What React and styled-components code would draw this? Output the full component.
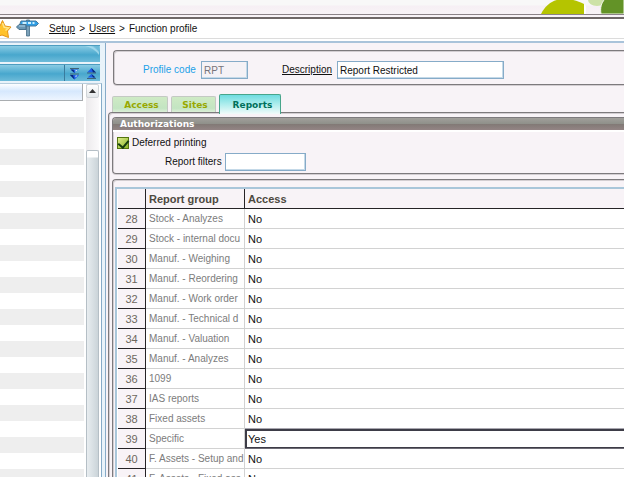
import React from "react";
import styled, { createGlobalStyle, css } from "styled-components";

const GlobalStyle = createGlobalStyle`
  * { box-sizing: border-box; }
  html, body { margin: 0; height: 100%; overflow: hidden; }
  body { font: 10px/14px "Liberation Sans", Arial, sans-serif; color: #111; background: #f8f3f7; }
  #root { height: 100%; }
  button, input { font: inherit; color: inherit; }
`;

const Page = styled.div`
  height: 100vh;
  display: flex;
  flex-direction: column;
`;

const Banner = styled.header`
  height: 19px;
  flex: none;
  display: flex;
  justify-content: flex-end;
  background: linear-gradient(#f8f8f8 5px, #f6eff4 6px, #f8f3f7 14px);
  border-bottom: 2px solid #6f6868;
  svg { display: block; height: 14px; }
`;

const BannerArt = styled.div`
  flex: 1;
  height: 15px;
  display: flex;
  justify-content: flex-end;
  border-bottom: 1px solid #8b8388;
`;

const Crumbs = styled.nav`
  height: 24px;
  flex: none;
  display: flex;
  align-items: center;
  padding-bottom: 3px;
  background: linear-gradient(#fff 19px, #dcdcdc 19px, #dcdcdc 20px, #fff 20px);
  border-bottom: 2px solid #a9c3da;
  svg { flex: none; }
  a { color: inherit; text-decoration: underline; }
`;

const Trail = styled.span`
  padding-left: 10px;
  display: flex;
  gap: 4px;
  white-space: nowrap;
`;

const Workspace = styled.div`
  flex: 1;
  min-height: 0;
  display: flex;
`;

const Sidebar = styled.aside`
  width: 106px;
  flex: none;
  display: flex;
  flex-direction: column;
  background: #e9f3fa;
  border-right: 1px solid #86abc8;
  padding: 2px 3px 0 0;
`;

const BlueBar = styled.div`
  height: 17px;
  flex: none;
  display: flex;
  justify-content: flex-end;
  margin: 0 2px 2px 0;
  border-top: 1px solid #4d9dc0;
  background: linear-gradient(#8acce4, #48a7cd 55%, #6dbbd9);
`;

const BarButton = styled.button`
  width: 17px;
  padding: 0;
  border: 0;
  background: none;
  display: grid;
  place-items: center;
  &:first-child { width: 19px; border-left: 1px solid #397b9d; }
`;

const SideBody = styled.div`
  flex: 1;
  min-height: 0;
  display: flex;
  background: #fff;
  border-right: 1px solid #86abc8;
  border-top: 1px solid #b6cddd;
`;

const SideList = styled.div`
  flex: 1;
  overflow: hidden;
  padding-right: 2px;
`;

const SideHead = styled.div`
  height: 17px;
  margin-right: 1px;
  background: linear-gradient(#fdfeff, #d6e8fd 45%, #edf5ff);
  border: solid #a9adb0;
  border-width: 0 1px 1px 0;
`;

const SideRow = styled.div`
  height: 16px;
  background: #fff;
  &:nth-child(odd) { background: #eee; }
`;

const ScrollTrack = styled.div`
  width: 13px;
  margin-right: 2px;
  display: flex;
  flex-direction: column;
  background: linear-gradient(90deg, #eceaec, #fbfafb);
`;

const ScrollButton = styled.button`
  height: 14px;
  padding: 0;
  border: 1px solid #cfd4d8;
  border-radius: 2px;
  background: linear-gradient(#fff, #e3e7ea);
  display: grid;
  place-items: center;
`;

const ScrollThumb = styled.div`
  flex: 1;
  margin-top: 52px;
  border: 1px solid #b5bfc6;
  border-bottom: 0;
  border-radius: 2px 2px 0 0;
  background: linear-gradient(#fff 6px, transparent 7px), linear-gradient(90deg, #e8edf0, #cbd4d9);
`;

const Main = styled.main`
  flex: 1;
  min-width: 0;
  display: flex;
  flex-direction: column;
  padding: 7px 0 0 2px;
`;

const frame = css`
  border: 1px solid #7d7a7d;
  border-right: 0;
  box-shadow: inset 1px 1px #d3ced2, 0 1px #d3ced2;
`;

const ProfileBox = styled.section`
  ${frame}
  flex: none;
  height: 35px;
  margin-left: 5px;
  border-radius: 4px 0 0 4px;
  display: flex;
  align-items: center;
  padding: 5px 0 0 29px;
`;

const FieldLabel = styled.label`
  width: ${(p) => p.$width}px;
  white-space: nowrap;
  color: ${(p) => (p.$accent ? "#1ba1e8" : "inherit")};
  text-decoration: ${(p) => (p.$linked ? "underline" : "none")};
`;

const TextBox = styled.input`
  width: ${(p) => p.$width}px;
  height: 18px;
  padding: 0 2px;
  border: 1px solid #86abc8;
  box-shadow: inset -1px -1px #c4d9e8;
  border-radius: 0;
  background: #fff;
  outline: 0;
  &:read-only { background: #f5f2f6; color: #77747a; }
`;

const Gap = styled.span`
  width: 34px;
`;

const Tabs = styled.div`
  flex: none;
  display: flex;
  align-items: flex-end;
  height: 27px;
  padding-left: 4px;
  gap: 3px;
`;

const Tab = styled.button`
  height: ${(p) => (p.$active ? 20 : 16)}px;
  width: ${(p) => p.$width}px;
  padding: ${(p) => (p.$active ? "1px 0 0 5px" : "1px 0 0 3px")};
  border: 1px solid ${(p) => (p.$active ? "#48a58b" : "#c4c9c3")};
  border-bottom: 0;
  border-radius: 2px 2px 0 0;
  background: ${(p) =>
    p.$active ? "linear-gradient(#6fdce0, #a9ecec 45%, #f1fbfa)" : "linear-gradient(#cfeac5, #c3e5c2 75%, #dcefd8)"};
  color: ${(p) => (p.$active ? "#00705a" : "#98a800")};
  font: bold 9px/14px "DejaVu Sans", sans-serif;
  position: relative;
  z-index: 1;
  margin-bottom: ${(p) => (p.$active ? -2 : 0)}px;
`;

const TabPanel = styled.div`
  ${frame}
  flex: 1;
  min-height: 0;
  border-bottom: 0;
  border-top-left-radius: 4px;
  padding: 4px 0 0 3px;
  display: flex;
  flex-direction: column;
  gap: 5px;
`;

const Group = styled.section`
  ${frame}
  flex: none;
  height: 57px;
  border-radius: 4px 0 0 4px;
`;

const GroupTitle = styled.h2`
  margin: 0;
  height: 12px;
  padding-left: 7px;
  font: bold 9px/13px "DejaVu Sans", sans-serif;
  color: #fff;
  background: linear-gradient(#a19f9b, #8f908a 48%, #817975 50%, #938484);
  box-shadow: 0 2px #fff;
  border-radius: 3px 0 0 0;
`;

const CheckLine = styled.label`
  display: flex;
  align-items: center;
  gap: 3px;
  padding: 6px 0 0 4px;
`;

const CheckBox = styled.input`
  appearance: none;
  width: 12px;
  height: 12px;
  margin: 0;
  border: 1px solid #54750f;
  background: linear-gradient(135deg, #dceb8a, #8cb62a);
  display: grid;
  place-items: center;
  &:checked::before {
    content: "";
    width: 5px;
    height: 8px;
    margin-bottom: 3px;
    border: solid #163d10;
    border-width: 0 2px 2px 0;
    transform: rotate(40deg);
  }
`;

const FilterLine = styled.div`
  display: flex;
  align-items: center;
  padding: 3px 0 0 52px;
`;

const GridGroup = styled.section`
  ${frame}
  flex: 1;
  min-height: 0;
  border-bottom: 0;
  border-top-left-radius: 4px;
  padding: 7px 0 0 2px;
`;

const GridFrame = styled.div`
  height: 100%;
  overflow: hidden;
  border: solid #a9c6da;
  border-width: 2px 0 0 2px;
  background: #fff;
  padding-left: 1px;
`;

const Grid = styled.table`
  width: 100%;
  table-layout: fixed;
  border-collapse: separate;
  border-spacing: 0;
  th, td {
    height: 20px;
    padding: 1px 0 0 3px;
    text-align: left;
    white-space: nowrap;
    border-bottom: 1px solid #d2d2d2;
    border-right: 1px solid #d2d2d2;
  }
  tr > :last-child { border-right: 0; }
  thead th {
    font: bold 11px/14px "Liberation Sans", Arial, sans-serif;
    color: #4d493f;
    background: #f8f3f7;
    border-color: #262326;
  }
`;

const NumberCol = styled.col`
  width: 28px;
`;
const GroupCol = styled.col`
  width: 99px;
`;

const RowNumber = styled.th`
  && {
    padding: 1px 0 0;
    text-align: center;
    font-size: 11px;
    font-weight: normal;
    color: #6d675e;
    background: #f8f3f7;
    border-color: #262326;
  }
`;

const GroupCell = styled.td`
  color: #7c7c7c;
`;

const AccessCell = styled.td`
  font-size: 11px;
  ${(p) =>
    p.$selected &&
    css`
      box-shadow: inset 2px 2px #3d3c47, inset 0 -1px #3d3c47, 0 -1px #a9a7b0;
      && { border-bottom-color: #6d6b75; }
    `}
`;

const rows = [
  [28, "Stock - Analyzes"],
  [29, "Stock - internal docu"],
  [30, "Manuf. - Weighing"],
  [31, "Manuf. - Reordering"],
  [32, "Manuf. - Work order"],
  [33, "Manuf. - Technical d"],
  [34, "Manuf. - Valuation"],
  [35, "Manuf. - Analyzes"],
  [36, "1099"],
  [37, "IAS reports"],
  [38, "Fixed assets"],
  [39, "Specific"],
  [40, "F. Assets - Setup and"],
  [41, "F. Assets - Fixed ass"],
];

function Arrows({ up }) {
  return (
    <svg width="11" height="13" viewBox="0 0 11 13" aria-hidden="true">
      {up ? (
        <>
          <path d="M1 5.500 5.500 1 10 5.500ZM1.500 10.500 5.500 7 9.500 10.500Z" fill="#1d5fe8" />
          <path d="M5.500 1 10 5.500H7ZM5.500 7 9.500 10.500H7Z" fill="#08287c" />
          <path d="M1 6h9M1 11.500h9" stroke="#3f6478" />
        </>
      ) : (
        <>
          <path d="M1.500 2.500h8L5.500 6ZM1 8h9L5.500 12.500Z" fill="#1d5fe8" />
          <path d="M1.500 2.500h3L5.500 6ZM1 8h3L5.500 12.500Z" fill="#08287c" />
          <path d="M1 1.500h9M1 7h9" stroke="#3f6478" />
          <path d="M6.500 3h2L6.500 5ZM6.500 8.500h2L6.500 10.500Z" fill="#dff2ff" />
        </>
      )}
    </svg>
  );
}

export default function App() {
  return (
    <Page>
      <GlobalStyle />
      <Banner>
        <BannerArt>
          <svg width="84" height="14" viewBox="0 0 84 14" aria-hidden="true">
            <path d="M1 14C6 4 14-1 24-1C32-1 38 1 44 4V14Z" fill="#b5c400" />
            <path d="M44 4l2 2v8h-2Z" fill="#fff" />
            <ellipse cx="57" cy="0" rx="9" ry="6" fill="#cde2a7" />
            <path d="M61 14C60 8 61 3 65-1H84V14Z" fill="#639327" stroke="#f4f8ed" />
          </svg>
        </BannerArt>
      </Banner>
      <Crumbs aria-label="Breadcrumb">
        <svg width="39" height="20" viewBox="0 0 39 20" aria-hidden="true">
          <path d="M2.500 1.500 5 7 11 8 7.500 12 8.500 18.500 2 16-4 18-2 12-6 8 0 7Z" fill="#ffc22c" stroke="#e59418" strokeLinejoin="round" />
          <path d="M2.500 4 4.200 8.300 8.500 9 5.500 11.500" fill="none" stroke="#ffe58a" strokeWidth="1.500" />
          <path d="M26.500 1h3v16h-3Z" fill="#7ba0b8" stroke="#446c87" strokeWidth=".8" />
          <path d="M21 2H36L38.500 4.500 36 7H21L20 4.500Z" fill="#2f9ee6" stroke="#49799a" strokeLinejoin="round" />
          <path d="M22.500 4h4M28 4h3M32.500 4h2" stroke="#c9efff" strokeWidth="1.800" />
          <path d="M19 5.500H26V10.500H19L16.500 8Z" fill="#6c98b5" stroke="#48718d" strokeLinejoin="round" />
          <path d="M19 7h6" stroke="#a8cfe4" />
        </svg>
        <Trail>
          <a href="#setup">Setup</a>
          <span>&gt;</span>
          <a href="#users">Users</a>
          <span>&gt;</span>
          <span>Function profile</span>
        </Trail>
      </Crumbs>
      <Workspace>
        <Sidebar>
          <BlueBar>
            <svg width="16" height="16" viewBox="0 0 16 16" aria-hidden="true">
              <path d="M1 0Q10 2 15 9V6Q11 1 6 0Z" fill="#a9dcee" opacity=".8" />
              <path d="M9 0h6v5Q13 2 9 0Z" fill="#6dbbd9" />
            </svg>
          </BlueBar>
          <BlueBar>
            <BarButton aria-label="Expand all"><Arrows /></BarButton>
            <BarButton aria-label="Collapse all"><Arrows up /></BarButton>
          </BlueBar>
          <SideBody>
            <SideList>
              <SideHead />
              {Array.from({ length: 24 }, (_, i) => <SideRow key={i} />)}
            </SideList>
            <ScrollTrack>
              <ScrollButton aria-label="Scroll up">
                <svg width="7" height="4" viewBox="0 0 7 4" aria-hidden="true"><path d="M0 4 3.500 0 7 4Z" fill="#333" /></svg>
              </ScrollButton>
              <ScrollThumb />
            </ScrollTrack>
          </SideBody>
        </Sidebar>
        <Main>
          <ProfileBox>
            <FieldLabel htmlFor="code" $width={58} $accent>Profile code</FieldLabel>
            <TextBox id="code" $width={47} defaultValue="RPT" readOnly />
            <Gap />
            <FieldLabel htmlFor="description" $width={55} $linked>Description</FieldLabel>
            <TextBox id="description" $width={167} defaultValue="Report Restricted" />
          </ProfileBox>
          <Tabs role="tablist">
            <Tab role="tab" $width={56}>Access</Tab>
            <Tab role="tab" $width={45}>Sites</Tab>
            <Tab role="tab" aria-selected="true" $width={62} $active>Reports</Tab>
          </Tabs>
          <TabPanel role="tabpanel">
            <Group>
              <GroupTitle>Authorizations</GroupTitle>
              <CheckLine><CheckBox type="checkbox" defaultChecked />Deferred printing</CheckLine>
              <FilterLine>
                <FieldLabel htmlFor="filters" $width={60}>Report filters</FieldLabel>
                <TextBox id="filters" $width={81} />
              </FilterLine>
            </Group>
            <GridGroup>
              <GridFrame>
                <Grid>
                  <colgroup><NumberCol /><GroupCol /><col /></colgroup>
                  <thead><tr><th /><th>Report group</th><th>Access</th></tr></thead>
                  <tbody>
                    {rows.map(([n, name]) => (
                      <tr key={n}>
                        <RowNumber scope="row">{n}</RowNumber>
                        <GroupCell>{name}</GroupCell>
                        <AccessCell $selected={n === 39}>{n === 39 ? "Yes" : "No"}</AccessCell>
                      </tr>
                    ))}
                  </tbody>
                </Grid>
              </GridFrame>
            </GridGroup>
          </TabPanel>
        </Main>
      </Workspace>
    </Page>
  );
}
